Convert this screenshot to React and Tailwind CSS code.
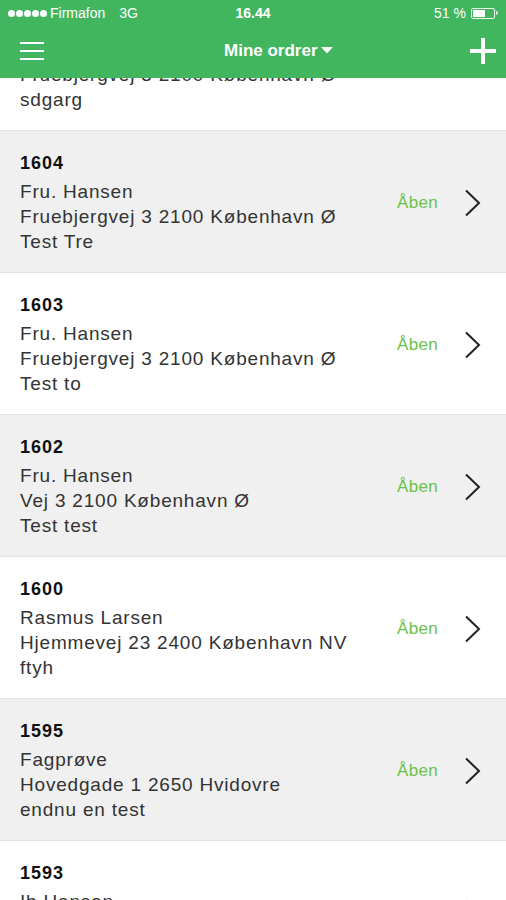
const orders = [
    { id: '1605', name: 'Fru. Hansen', address: 'Fruebjergvej 3 2100 København Ø', note: 'sdgarg' },
    { id: '1604', name: 'Fru. Hansen', address: 'Fruebjergvej 3 2100 København Ø', note: 'Test Tre' },
    { id: '1603', name: 'Fru. Hansen', address: 'Fruebjergvej 3 2100 København Ø', note: 'Test to' },
    { id: '1602', name: 'Fru. Hansen', address: 'Vej 3 2100 København Ø', note: 'Test test' },
    { id: '1600', name: 'Rasmus Larsen', address: 'Hjemmevej 23 2400 København NV', note: 'ftyh' },
    { id: '1595', name: 'Fagprøve', address: 'Hovedgade 1 2650 Hvidovre', note: 'endnu en test' },
    { id: '1593', name: 'Ib Hansen', address: 'Fruebjergvej 3 2100 København Ø', note: 'test' },
];

function StatusBar() {
    return (
        <div className="h-[26px] flex items-center px-[8px] text-white text-[14px] relative">
            <div className="flex items-center">
                <span className="flex gap-[1px]">
                    {[0, 1, 2, 3, 4].map(i => (
                        <span key={i} className="w-[7px] h-[7px] rounded-full bg-white" />
                    ))}
                </span>
                <span className="ml-[3px]">Firmafon</span>
                <span className="ml-[14px]">3G</span>
            </div>
            <div className="absolute left-1/2 -translate-x-1/2 font-semibold">16.44</div>
            <div className="ml-auto flex items-center gap-[5px]">
                <span>51 %</span>
                <span className="flex items-center">
                    <span className="w-[24px] h-[11px] border border-white/90 rounded-[2px] p-[1px] flex">
                        <span className="w-[12px] h-full bg-white" />
                    </span>
                    <span className="w-[2px] h-[4px] bg-white/80 rounded-r ml-[1px]" />
                </span>
            </div>
        </div>
    );
}

function NavBar() {
    return (
        <div className="h-[52px] pb-[2px] flex items-center justify-between pl-[19px] pr-[9px] relative">
            <svg width="26" height="20" viewBox="0 0 26 20" className="text-white">
                <path d="M1 2h24M1 10h24M1 18h24" stroke="currentColor" strokeWidth="2.2" />
            </svg>
            <div className="absolute left-[224px] top-[12px] flex items-center gap-[3px] text-white font-bold text-[17px]">
                <span>Mine ordrer</span>
                <svg width="12" height="7" viewBox="0 0 12 7">
                    <path d="M0 0h12L6 6.5z" fill="white" />
                </svg>
            </div>
            <svg width="28" height="28" viewBox="0 0 28 28">
                <path d="M14 1v26M1 14h26" stroke="white" strokeWidth="4" />
            </svg>
        </div>
    );
}

function OrderRow({ order, shaded }) {
    return (
        <div className={`h-[142px] flex items-center border-t border-[#e3e3e3] ${shaded ? 'bg-[#f0f0f0]' : 'bg-white'}`}>
            <div className="flex-1 pl-[20px] pt-[19px] self-start">
                <div className="h-[26px] leading-[26px] font-bold text-[18px] tracking-[1px] text-[#111] mb-[3px]">{order.id}</div>
                <div className="text-[19px] leading-[25px] text-[#333] tracking-[0.8px]">
                    <div>{order.name}</div>
                    <div>{order.address}</div>
                    <div>{order.note}</div>
                </div>
            </div>
            <div className="text-[#6cc24a] text-[17px] mr-[26px] mt-[2px] tracking-[0.3px]">Åben</div>
            <svg width="18" height="28" viewBox="0 0 18 28" className="mr-[24px] mt-[2px]">
                <path d="M2 1.5l13 12.5L2 26.5" fill="none" stroke="#222" strokeWidth="2" />
            </svg>
        </div>
    );
}

export default function App() {
    return (
        <div className="w-[506px] h-[900px] overflow-hidden bg-white flex flex-col" style={{ fontFamily: '"Liberation Sans", Arial, sans-serif' }}>
            <header className="bg-[#42b65f] shrink-0 relative z-10">
                <StatusBar />
                <NavBar />
            </header>
            <div className="flex-1 overflow-hidden">
                <div className="-mt-[90px]">
                    {orders.map((o, i) => (
                        <OrderRow key={o.id} order={o} shaded={i % 2 === 1} />
                    ))}
                </div>
            </div>
        </div>
    );
}
